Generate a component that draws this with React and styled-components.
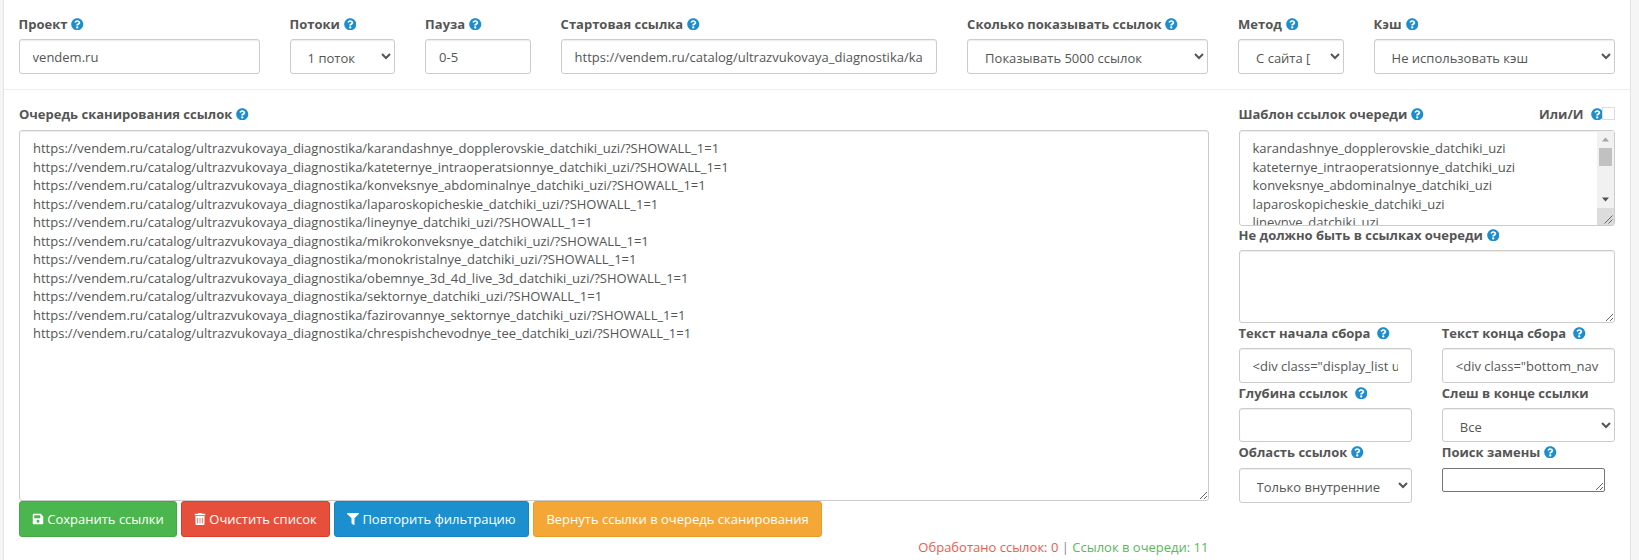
import React from "react";
import styled, { createGlobalStyle } from "styled-components";
import { FaQuestionCircle, FaSave, FaTrashAlt, FaFilter } from "react-icons/fa";

const GlobalStyle = createGlobalStyle`
  html, body {
    margin: 0;
    height: 560px;
    overflow: hidden;
    background: #f5f5f5;
    font-family: "Open Sans", "Liberation Sans", sans-serif;
    font-size: 13px;
    color: #555;
  }
`;

const Card = styled.div`
  margin: 0 8px 0 3px;
  height: 560px;
  box-sizing: border-box;
  background: #fff;
  border-left: 1px solid #e4e4e4;
  border-right: 1px solid #e4e4e4;
`;

const Grid = styled.div`
  display: grid;
  grid-template-columns: repeat(12, 1fr);
  column-gap: 30px;
  padding: 15px;
`;

const TopGrid = styled(Grid)`
  padding: 15px 15.4px 15px 14.6px;
  border-bottom: 1px solid #eee;
`;

const Col = styled.div`
  grid-column: span ${(p) => p.$span};
  min-width: 0;
`;

const Label = styled.label`
  display: flex;
  align-items: center;
  height: 18px;
  margin-bottom: ${(p) => p.$mb ?? 6}px;
  font-weight: 700;
  font-size: 13px;
  line-height: 18px;
  color: #555;
  white-space: nowrap;
`;

const Help = styled(FaQuestionCircle)`
  margin-left: ${(p) => (p.$wide ? 7 : 4)}px;
  width: 12.5px;
  height: 12.5px;
  color: #1c8dce;
  flex: none;
`;

const fieldCss = `
  display: block;
  width: 100%;
  box-sizing: border-box;
  border: 1px solid #ccc;
  border-radius: 3px;
  background: #fff;
  color: #555;
  font-family: "Open Sans", "Liberation Sans", sans-serif;
  font-size: 13px;
  box-shadow: inset 0 1px 1px rgba(0, 0, 0, 0.075);
  outline: none;
`;

const Input = styled.input`
  ${fieldCss}
  height: ${(p) => (p.$tall ? 35 : 34)}px;
  padding: ${(p) => (p.$tall ? 7 : 6)}px 13px 6px;
`;

const Select = styled.select`
  ${fieldCss}
  height: ${(p) => (p.$tall ? 35 : 34)}px;
  padding: 8px 13px 6px;
`;

const TextArea = styled.textarea`
  ${fieldCss}
  height: ${(p) => p.$h}px;
  padding: 8px 13px;
  line-height: 18.5px;
  resize: vertical;
`;

const PatternWrap = styled.div`
  position: relative;
`;

const ScrollRail = styled.div`
  position: absolute;
  top: 1px;
  right: 1px;
  width: 17px;
  height: 77px;
  display: flex;
  flex-direction: column;
  justify-content: space-between;
  background: #f1f1f1;
  pointer-events: none;
`;

const ScrollTop = styled.div`
  display: flex;
  flex-direction: column;
  align-items: center;
`;

const ScrollArrow = styled.svg`
  display: block;
  width: 17px;
  height: 17px;
  fill: ${(p) => p.$color};
`;

const ScrollThumb = styled.div`
  width: 13px;
  height: 18px;
  background: #c1c1c1;
`;

const ResizeCorner = styled.svg`
  position: absolute;
  right: 1px;
  bottom: 1px;
  width: 17px;
  height: 17px;
  background: #dcdcdc;
  stroke: #666;
  pointer-events: none;
`;

const ReplaceArea = styled.textarea`
  display: block;
  box-sizing: border-box;
  width: 163px;
  height: 24px;
  padding: 2px;
  border: 1px solid #767676;
  border-radius: 2px;
  background: #fff;
  outline: none;
  resize: both;
`;

const LabelRow = styled.div`
  display: flex;
  justify-content: space-between;
  align-items: flex-start;
`;

const CheckBox = styled.span`
  display: block;
  width: 13px;
  height: 13px;
  margin: 2px 0 0 -1px;
  box-sizing: border-box;
  border: 1px solid #ddd;
  background: #fff;
`;

const TwoCols = styled.div`
  display: grid;
  grid-template-columns: 1fr 1fr;
  column-gap: 30px;
  margin-top: 1px;
`;

const Toolbar = styled.div`
  display: flex;
  gap: 4px;
`;

const colors = {
  green: ["#4cb64e", "#44a846"],
  red: ["#e74f3d", "#dc3c2a"],
  blue: ["#1c8fcf", "#1a82bd"],
  orange: ["#f4a736", "#eb9c28"],
};

const Button = styled.button`
  display: inline-flex;
  align-items: center;
  justify-content: center;
  gap: 3px;
  width: ${(p) => p.$w}px;
  height: 36px;
  padding: 0;
  border: 1px solid ${(p) => colors[p.$tone][1]};
  border-radius: 3px;
  background: ${(p) => colors[p.$tone][0]};
  color: #fff;
  font-family: "Open Sans", "Liberation Sans", sans-serif;
  font-size: 13px;
  white-space: nowrap;
  svg {
    width: 12px;
    height: 12px;
  }
`;

const Status = styled.div`
  margin-top: 1px;
  text-align: right;
  line-height: 18px;
  color: #888;
`;

const Processed = styled.span`
  color: #ee5a4c;
`;

const Queued = styled.span`
  color: #58b85a;
`;

const links = [
  "karandashnye_dopplerovskie_datchiki_uzi",
  "kateternye_intraoperatsionnye_datchiki_uzi",
  "konveksnye_abdominalnye_datchiki_uzi",
  "laparoskopicheskie_datchiki_uzi",
  "lineynye_datchiki_uzi",
  "mikrokonveksnye_datchiki_uzi",
  "monokristalnye_datchiki_uzi",
  "obemnye_3d_4d_live_3d_datchiki_uzi",
  "sektornye_datchiki_uzi",
  "fazirovannye_sektornye_datchiki_uzi",
  "chrespishchevodnye_tee_datchiki_uzi",
];

const base = "https://vendem.ru/catalog/ultrazvukovaya_diagnostika/";
const queue = links.map((l) => `${base}${l}/?SHOWALL_1=1`).join("\n");

export default function App() {
  return (
    <>
      <GlobalStyle />
      <Card>
        <TopGrid>
          <Col $span={2}>
            <Label>Проект <Help /></Label>
            <Input $tall defaultValue="vendem.ru" />
          </Col>
          <Col $span={1}>
            <Label>Потоки <Help /></Label>
            <Select $tall defaultValue="1">
              <option value="1">1 поток</option>
              <option value="2">2 потока</option>
            </Select>
          </Col>
          <Col $span={1}>
            <Label>Пауза <Help /></Label>
            <Input $tall defaultValue="0-5" />
          </Col>
          <Col $span={3}>
            <Label>Стартовая ссылка <Help /></Label>
            <Input $tall defaultValue={`${base}karandashnye_dopplerovskie_datchiki_uzi/`} />
          </Col>
          <Col $span={2}>
            <Label>Сколько показывать ссылок <Help /></Label>
            <Select $tall defaultValue="5000">
              <option value="5000">Показывать 5000 ссылок</option>
            </Select>
          </Col>
          <Col $span={1}>
            <Label>Метод <Help /></Label>
            <Select $tall defaultValue="site">
              <option value="site">С сайта [ PHP ]</option>
            </Select>
          </Col>
          <Col $span={2}>
            <Label>Кэш <Help /></Label>
            <Select $tall defaultValue="none">
              <option value="none">Не использовать кэш</option>
            </Select>
          </Col>
        </TopGrid>
        <Grid>
          <Col $span={9}>
            <Label $mb={7}>Очередь сканирования ссылок <Help /></Label>
            <TextArea $h={371} defaultValue={queue} spellCheck={false} />
            <Toolbar>
              <Button $tone="green" $w={158}><FaSave /> Сохранить ссылки</Button>
              <Button $tone="red" $w={149}><FaTrashAlt /> Очистить список</Button>
              <Button $tone="blue" $w={195}><FaFilter /> Повторить фильтрацию</Button>
              <Button $tone="orange" $w={289}>Вернуть ссылки в очередь сканирования</Button>
            </Toolbar>
            <Status>
              <Processed>Обработано ссылок: 0</Processed> | <Queued>Ссылок в очереди: 11</Queued>
            </Status>
          </Col>
          <Col $span={3}>
            <LabelRow>
              <Label $mb={7}>Шаблон ссылок очереди <Help /></Label>
              <LabelRow>
                <Label $mb={7}>Или/И <Help $wide /></Label>
                <CheckBox />
              </LabelRow>
            </LabelRow>
            <PatternWrap>
              <TextArea $h={96} defaultValue={links.join("\n")} spellCheck={false} wrap="off" />
              <ScrollRail>
                <ScrollTop>
                  <ScrollArrow $color="#a3a3a3" viewBox="0 0 17 17">
                    <polygon points="8.5,6.5 12,10.5 5,10.5" />
                  </ScrollArrow>
                  <ScrollThumb />
                </ScrollTop>
                <ScrollArrow $color="#505050" viewBox="0 0 17 17">
                  <polygon points="5,6.5 12,6.5 8.5,10.5" />
                </ScrollArrow>
              </ScrollRail>
              <ResizeCorner viewBox="0 0 17 17">
                <path d="M15.5 7.5 L7.5 15.5 M15.5 11.5 L11.5 15.5" />
              </ResizeCorner>
            </PatternWrap>
            <Label>Не должно быть в ссылках очереди <Help /></Label>
            <TextArea $h={73} />
            <TwoCols>
              <div>
                <Label>Текст начала сбора <Help $wide /></Label>
                <Input $tall defaultValue={'<div class="display_list ui-sortable">'} />
              </div>
              <div>
                <Label>Текст конца сбора <Help $wide /></Label>
                <Input $tall defaultValue={'<div class="bottom_nav animate">'} />
              </div>
            </TwoCols>
            <TwoCols>
              <div>
                <Label>Глубина ссылок <Help $wide /></Label>
                <Input />
              </div>
              <div>
                <Label>Слеш в конце ссылки</Label>
                <Select defaultValue="all">
                  <option value="all">Все</option>
                </Select>
              </div>
            </TwoCols>
            <TwoCols>
              <div>
                <Label $mb={7}>Область ссылок <Help /></Label>
                <Select $tall defaultValue="in">
                  <option value="in">Только внутренние</option>
                </Select>
              </div>
              <div>
                <Label $mb={7}>Поиск замены <Help /></Label>
                <ReplaceArea />
              </div>
            </TwoCols>
          </Col>
        </Grid>
      </Card>
    </>
  );
}
